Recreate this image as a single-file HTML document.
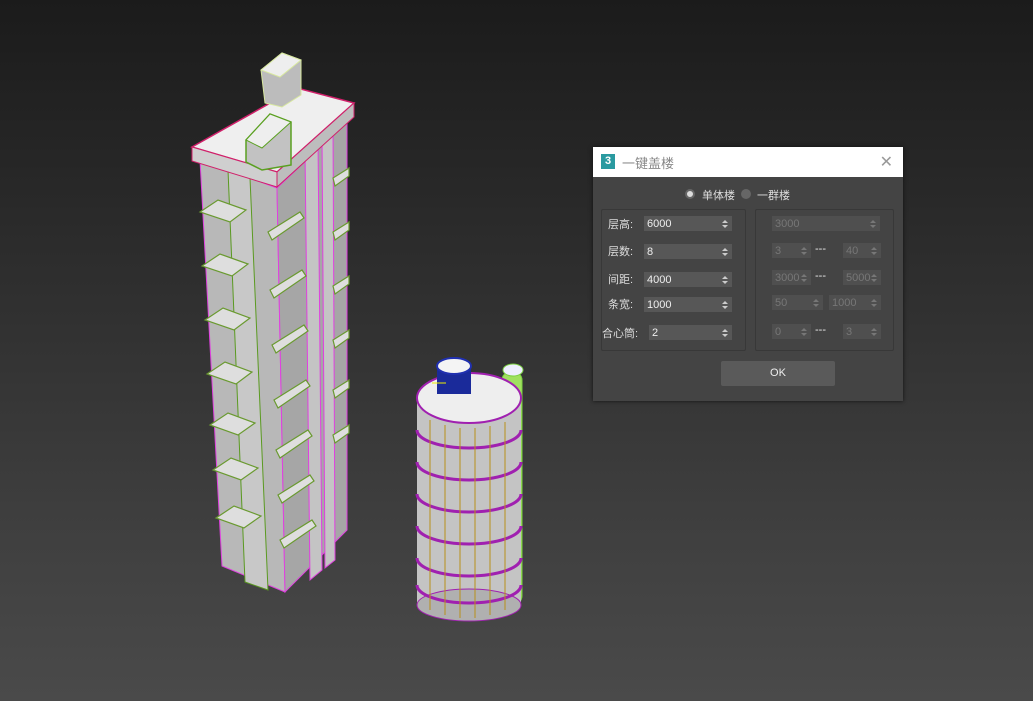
<!DOCTYPE html>
<html><head><meta charset="utf-8"><style>
body{margin:0;width:1033px;height:701px;overflow:hidden;background:linear-gradient(#1b1b1b,#2c2c2c 35%,#3f3f3f 75%,#4a4a4a);font-family:"Liberation Sans","Noto Sans CJK SC",sans-serif;position:relative}
.dlg{position:absolute;left:593px;top:147px;width:310px;height:254px;background:#444;box-shadow:0 0 4px #111}
.tb{height:30px;background:#fff;position:relative}
.tb .ic{position:absolute;left:8px;top:7px;width:14px;height:15px;background:#2a9aa0;color:#fff;font-size:11px;font-weight:bold;text-align:center;line-height:15px}
.tb .t{position:absolute;left:29px;top:6px;font-size:13px;color:#888}
.tb .x{position:absolute;right:10px;top:5px;font-size:16px;color:#999;font-weight:300}
.a{position:absolute;font-size:11px;color:#ddd}
.box{position:absolute;border:1px solid #383838;border-radius:2px}
.in{position:absolute;height:15px;background:#575757;color:#eee;font-size:11px;line-height:17px;padding-left:3px;box-sizing:border-box}
.in.d{background:#4f4f4f;color:#777}
.in:after{content:"";position:absolute;right:4px;top:4px;width:0;height:0;border-left:3px solid transparent;border-right:3px solid transparent;border-bottom:3px solid #ccc}
.in:before{content:"";position:absolute;right:4px;top:9px;width:0;height:0;border-left:3px solid transparent;border-right:3px solid transparent;border-top:3px solid #ccc}
.in.d:after{border-bottom-color:#777}.in.d:before{border-top-color:#777}
.dash{position:absolute;color:#eee;font-size:11px}
.rad{position:absolute;width:10px;height:10px;border-radius:50%;background:#666}
</style></head><body>
<svg width="1033" height="701" style="position:absolute;left:0;top:0">
<polygon points="200,160 277,188 285,592 222,566" fill="#b8b8b8" stroke="#e040e0" stroke-width="1"/>
<polygon points="277,188 347,122 347,530 285,592" fill="#a6a6a6" stroke="#e040e0" stroke-width="1"/>
<polygon points="228,170 250,178 268,590 245,582" fill="#c8c8c8" stroke="#5a9a20"/>
<polygon points="305,150 318,140 322,570 310,580" fill="#c4c4c4" stroke="#e040e0"/>
<polygon points="322,135 333,125 335,560 325,568" fill="#c4c4c4" stroke="#e040e0"/>
<g fill="#dedede" stroke="#6a9a30" stroke-width="1.2">
<polygon points="200,212 218,200 246,210 230,222"/><polygon points="202,266 220,254 248,264 232,276"/><polygon points="205,320 223,308 250,318 234,330"/><polygon points="207,374 225,362 252,372 236,384"/><polygon points="210,425 228,413 255,423 238,435"/><polygon points="213,470 231,458 258,468 241,480"/><polygon points="216,518 234,506 261,516 244,528"/>
<polygon points="268,232 300,212 304,218 272,240"/><polygon points="270,290 302,270 306,276 274,298"/><polygon points="272,345 304,325 308,331 276,353"/><polygon points="274,400 306,380 310,386 278,408"/><polygon points="276,450 308,430 312,436 280,458"/><polygon points="278,495 310,475 314,481 282,503"/><polygon points="280,540 312,520 316,526 284,548"/>
<polygon points="333,178 349,168 349,176 335,186"/><polygon points="333,232 349,222 349,230 335,240"/><polygon points="333,286 349,276 349,284 335,294"/><polygon points="333,340 349,330 349,338 335,348"/><polygon points="333,390 349,380 349,388 335,398"/><polygon points="333,435 349,425 349,433 335,443"/></g>
<polygon points="192,147 297,88 354,103 277,172" fill="#efefef" stroke="#d0206a" stroke-width="1.5"/>
<polygon points="192,147 277,172 277,187 192,161" fill="#cfcfcf" stroke="#d0206a"/>
<polygon points="277,172 354,103 354,117 277,187" fill="#bdbdbd" stroke="#d0206a"/>
<polygon points="261,70 282,53 301,60 301,95 282,107 265,103" fill="#bcbcbc" stroke="#d8e8a0"/>
<polygon points="261,70 282,53 301,60 280,77" fill="#eee" stroke="#d8e8a0"/>
<polygon points="246,140 270,114 291,122 291,165 262,170 246,162" fill="#c2c2c2" stroke="#5aa020" stroke-width="1.5"/>
<polygon points="246,140 270,114 291,122 262,148" fill="#eee" stroke="#5aa020"/>
<rect x="502" y="372" width="20" height="232" rx="8" fill="#a0e060" stroke="#7ad040"/>
<rect x="417" y="395" width="104" height="210" fill="#c4c4c4"/>
<ellipse cx="469" cy="605" rx="52" ry="16" fill="#b0b0b0" stroke="#a020b0"/>
<g fill="none" stroke="#a020b0" stroke-width="3">
<path d="M417,430 A52,18 0 0 0 521,430"/><path d="M417,462 A52,18 0 0 0 521,462"/><path d="M417,494 A52,18 0 0 0 521,494"/><path d="M417,526 A52,18 0 0 0 521,526"/><path d="M417,558 A52,18 0 0 0 521,558"/><path d="M417,585 A52,18 0 0 0 521,585"/></g>
<g stroke="#b8901a" stroke-width="1"><line x1="430" y1="420" x2="430" y2="610"/><line x1="445" y1="425" x2="445" y2="615"/><line x1="460" y1="428" x2="460" y2="618"/><line x1="475" y1="428" x2="475" y2="618"/><line x1="490" y1="426" x2="490" y2="615"/><line x1="505" y1="422" x2="505" y2="610"/></g>
<ellipse cx="469" cy="398" rx="52" ry="25" fill="#eee" stroke="#a020b0" stroke-width="2"/>
<ellipse cx="513" cy="370" rx="10" ry="6" fill="#eef" stroke="#7ad040"/>
<rect x="437" y="364" width="34" height="30" fill="#1a2a9a"/>
<ellipse cx="454" cy="366" rx="17" ry="8" fill="#f4f4f4" stroke="#2030b0" stroke-width="2"/>
<line x1="432" y1="383" x2="446" y2="383" stroke="#ee0"/>
</svg>
<div class="dlg">
<div class="tb"><div class="ic">3</div><div class="t">一键盖楼</div><div class="x">✕</div></div>
<div class="rad" style="left:92px;top:42px;background:#ddd;border:2px solid #666;width:6px;height:6px"></div>
<div class="a" style="left:109px;top:40px">单体楼</div>
<div class="rad" style="left:148px;top:42px"></div>
<div class="a" style="left:164px;top:40px">一群楼</div>
<div class="box" style="left:8px;top:62px;width:143px;height:140px"></div>
<div class="box" style="left:162px;top:62px;width:137px;height:140px"></div>
<div class="a" style="left:15px;top:69px">层高:</div><div class="in" style="left:51px;top:69px;width:88px">6000</div>
<div class="a" style="left:15px;top:96px">层数:</div><div class="in" style="left:51px;top:97px;width:88px">8</div>
<div class="a" style="left:15px;top:124px">间距:</div><div class="in" style="left:51px;top:125px;width:88px">4000</div>
<div class="a" style="left:15px;top:149px">条宽:</div><div class="in" style="left:51px;top:150px;width:88px">1000</div>
<div class="a" style="left:9px;top:178px">合心筒:</div><div class="in" style="left:56px;top:178px;width:83px">2</div>
<div class="in d" style="left:179px;top:69px;width:108px">3000</div>
<div class="in d" style="left:179px;top:96px;width:39px">3</div><div class="dash" style="left:222px;top:96px">---</div><div class="in d" style="left:250px;top:96px;width:38px">40</div>
<div class="in d" style="left:179px;top:123px;width:39px">3000</div><div class="dash" style="left:222px;top:123px">---</div><div class="in d" style="left:250px;top:123px;width:38px">5000</div>
<div class="in d" style="left:179px;top:148px;width:51px">50</div><div class="in d" style="left:236px;top:148px;width:52px">1000</div>
<div class="in d" style="left:179px;top:177px;width:39px">0</div><div class="dash" style="left:222px;top:177px">---</div><div class="in d" style="left:250px;top:177px;width:38px">3</div>
<div style="position:absolute;left:128px;top:214px;width:114px;height:25px;background:#5a5a5a;border-radius:2px;color:#eee;font-size:11px;text-align:center;line-height:25px">OK</div>
</div>
</body></html>
